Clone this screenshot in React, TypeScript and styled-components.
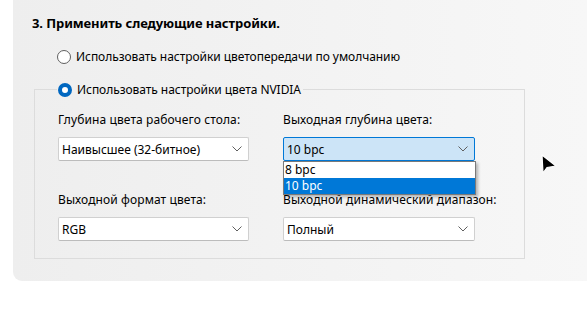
import styled, { createGlobalStyle } from "styled-components";

const GlobalStyle = createGlobalStyle`
  html, body {
    margin: 0;
    background: #ffffff;
  }
  body {
    font-family: "Noto Sans", "Open Sans", sans-serif;
    color: #000000;
  }
`;

const Page = styled.div`
  position: relative;
  width: 587px;
  height: 310px;
  overflow: hidden;
  background: #ffffff;
`;

const Panel = styled.div`
  margin-left: 13px;
  width: 574px;
  height: 281px;
  box-sizing: border-box;
  padding: 14px 0 0 19px;
  border-bottom-left-radius: 9px;
  background: linear-gradient(to right, #eeeeee, #f7f7f7);
`;

const Heading = styled.div`
  font-size: 13px;
  font-weight: 700;
  line-height: 18px;
  letter-spacing: -0.1px;
`;

const RadioRow = styled.label`
  display: flex;
  align-items: center;
  gap: 5px;
  font-size: 12px;
  line-height: 16px;
  letter-spacing: -0.05px;
  margin: 17px 0 0 25px;
`;

const RadioDot = styled.span<{ $checked?: boolean }>`
  width: 14px;
  height: 14px;
  box-sizing: border-box;
  border-radius: 50%;
  flex: none;
  border: ${(p) => (p.$checked ? "4px solid #0067c0" : "1px solid #5f5f5f")};
  background: #ffffff;
`;

const Group = styled.fieldset`
  margin: 15px 0 0 2px;
  width: 491px;
  height: 179px;
  box-sizing: border-box;
  padding: 0 0 0 23px;
  border: 1px solid #dcdcdc;
  min-inline-size: 0;
`;

const Legend = styled.legend`
  display: flex;
  align-items: center;
  gap: 5px;
  font-size: 12px;
  line-height: 16px;
  letter-spacing: -0.05px;
  padding: 2px 2px 0 1px;
  margin-left: -1px;
`;

const Fields = styled.div`
  display: grid;
  grid-template-columns: 191px 192px;
  column-gap: 34px;
  row-gap: 31px;
  margin-top: 14px;
`;

const Field = styled.div`
  position: relative;
  display: flex;
  flex-direction: column;
  gap: 9px;
`;

const Label = styled.div`
  font-size: 12px;
  line-height: 16px;
  letter-spacing: 0.1px;
  white-space: nowrap;
`;

const Combo = styled.div<{ $open?: boolean }>`
  height: 24px;
  box-sizing: border-box;
  display: flex;
  align-items: center;
  justify-content: space-between;
  padding: 0 6px 0 3px;
  font-size: 12px;
  border: 1px solid ${(p) => (p.$open ? "#0078d7" : "#d0d0d0")};
  border-bottom-color: ${(p) => (p.$open ? "#0078d7" : "#bcbcbc")};
  border-radius: 2px;
  background: ${(p) => (p.$open ? "#cce4f7" : "#ffffff")};
`;

const List = styled.div`
  position: absolute;
  left: 0;
  top: 49px;
  width: 193px;
  box-sizing: border-box;
  border: 1px solid #7a7a7a;
  background: #ffffff;
  box-shadow: 2px 2px 3px rgba(0, 0, 0, 0.28);
  z-index: 2;
`;

const Option = styled.div<{ $selected?: boolean }>`
  height: 16px;
  line-height: 16px;
  padding-left: 1px;
  font-size: 12px;
  background: ${(p) => (p.$selected ? "#0078d7" : "#ffffff")};
  color: ${(p) => (p.$selected ? "#ffffff" : "#000000")};
`;

const Cursor = styled.svg`
  position: absolute;
  left: 539px;
  top: 153px;
`;

function Chevron() {
  return (
    <svg width="10" height="6" viewBox="0 0 10 6">
      <path d="M0.5 0.5 L5 5 L9.5 0.5" fill="none" stroke="#606060" strokeWidth="1" />
    </svg>
  );
}

type Select = { label: string; value: string; open?: boolean; options?: string[] };

const selects: Select[] = [
  { label: "Глубина цвета рабочего стола:", value: "Наивысшее (32-битное)" },
  { label: "Выходная глубина цвета:", value: "10 bpc", open: true, options: ["8 bpc", "10 bpc"] },
  { label: "Выходной формат цвета:", value: "RGB" },
  { label: "Выходной динамический диапазон:", value: "Полный" },
];

export default function App() {
  return (
    <Page>
      <GlobalStyle />
      <Panel>
        <Heading>3. Применить следующие настройки.</Heading>
        <RadioRow>
          <RadioDot />
          Использовать настройки цветопередачи по умолчанию
        </RadioRow>
        <Group>
          <Legend>
            <RadioDot $checked />
            Использовать настройки цвета NVIDIA
          </Legend>
          <Fields>
            {selects.map((s) => (
              <Field key={s.label}>
                <Label>{s.label}</Label>
                <Combo $open={s.open}>
                  {s.value}
                  <Chevron />
                </Combo>
                {s.open && s.options && (
                  <List>
                    {s.options.map((o) => (
                      <Option key={o} $selected={o === s.value}>
                        {o}
                      </Option>
                    ))}
                  </List>
                )}
              </Field>
            ))}
          </Fields>
        </Group>
      </Panel>
      <Cursor width="20" height="24" viewBox="0 0 20 24">
        <path d="M3 2 L17 13 L8 14.5 L4 20 Z" fill="#000" stroke="#fff" strokeWidth="1.2" strokeLinejoin="round" />
      </Cursor>
    </Page>
  );
}
